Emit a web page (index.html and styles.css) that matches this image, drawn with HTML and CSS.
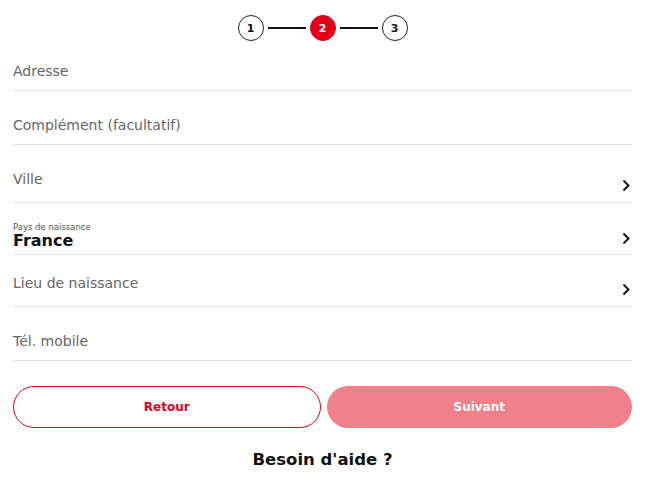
FILE: index.html
```html
<!DOCTYPE html>
<html lang="fr">
    <head>
        <meta charset="UTF-8">
        <title>Adresse</title>
        <link rel="stylesheet" href="styles.css">
    </head>
    <body>
    <div class="page">
        <ul class="steps">
            <li class="step">1</li>
            <li class="step-line"></li>
            <li class="step active">2</li>
            <li class="step-line"></li>
            <li class="step">3</li>
        </ul>
        <div class="field field-first">
            <span class="label">Adresse</span>
        </div>
        <div class="field">
            <span class="label">Complément (facultatif)</span>
        </div>
        <div class="field select select-tall">
            <span class="label">Ville</span>
            <svg class="chevron" width="8" height="13" viewBox="0 0 8 13"><path d="M1.5 1.5 L6.5 6.5 L1.5 11.5" fill="none" stroke="#111" stroke-width="2"/></svg>
        </div>
        <div class="field select filled">
            <div class="value-box">
                <span class="small-label">Pays de naissance</span>
                <span class="value">France</span>
            </div>
            <svg class="chevron" width="8" height="13" viewBox="0 0 8 13"><path d="M1.5 1.5 L6.5 6.5 L1.5 11.5" fill="none" stroke="#111" stroke-width="2"/></svg>
        </div>
        <div class="field select select-short">
            <span class="label">Lieu de naissance</span>
            <svg class="chevron" width="8" height="13" viewBox="0 0 8 13"><path d="M1.5 1.5 L6.5 6.5 L1.5 11.5" fill="none" stroke="#111" stroke-width="2"/></svg>
        </div>
        <div class="field">
            <span class="label">Tél. mobile</span>
        </div>
        <div class="buttons">
            <button class="btn btn-back">Retour</button>
            <button class="btn btn-next">Suivant</button>
        </div>
        <p class="help">Besoin d'aide ?</p>
    </div>
    </body>
</html>
```

FILE: styles.css
```css
*{
    margin:0;
    padding:0;
    box-sizing:border-box;
}
li{
    list-style:none;
}
body{
    background:#ffffff;
    font-family:"DejaVu Sans", sans-serif;
    color:#111111;
}
.page{
    padding:0 15px 0 13px;
}
.steps{
    display:flex;
    justify-content:center;
    align-items:center;
    padding-top:15px;
}
.step{
    width:26px;
    height:26px;
    border:1.5px solid #222222;
    border-radius:50%;
    font-size:11px;
    font-weight:bold;
    display:flex;
    align-items:center;
    justify-content:center;
}
.step.active{
    background:#e2001a;
    border-color:#e2001a;
    color:#ffffff;
}
.step-line{
    width:38px;
    height:2px;
    background:#111111;
    margin:0 4px;
}
.field{
    height:54px;
    border-bottom:1px solid #e6e6e6;
    padding-top:24px;
}
.field-first{
    height:50px;
    padding-top:20px;
}
.label{
    display:block;
    font-size:14px;
    line-height:20px;
    color:#666666;
}
.select{
    display:flex;
    justify-content:space-between;
    align-items:flex-end;
    padding-bottom:10px;
}
.select .label{
    align-self:flex-start;
}
.select-tall{
    height:58px;
}
.select-short{
    height:52px;
    padding-top:18px;
}
.chevron{
    margin-right:2px;
}
.filled{
    height:52px;
    padding-top:19px;
    padding-bottom:9px;
}
.value-box{
    display:flex;
    flex-direction:column;
    align-self:flex-start;
}
.small-label{
    font-size:8.5px;
    line-height:10px;
    color:#555555;
}
.value{
    font-size:16px;
    line-height:18px;
    font-weight:bold;
    color:#111111;
}
.buttons{
    display:flex;
    gap:6px;
    margin-top:25px;
}
.btn{
    flex:1 1 0;
    min-width:0;
    padding:0;
    height:42px;
    border-radius:21px;
    font-family:"DejaVu Sans", sans-serif;
    font-size:12px;
    font-weight:bold;
}
.btn-back{
    background:#ffffff;
    border:1px solid #e2001a;
    color:#e2001a;
}
.btn-next{
    background:#f0808a;
    border:none;
    color:#ffffff;
}
.help{
    text-align:center;
    font-size:16.5px;
    font-weight:bold;
    margin-top:21px;
    line-height:22px;
}
```
